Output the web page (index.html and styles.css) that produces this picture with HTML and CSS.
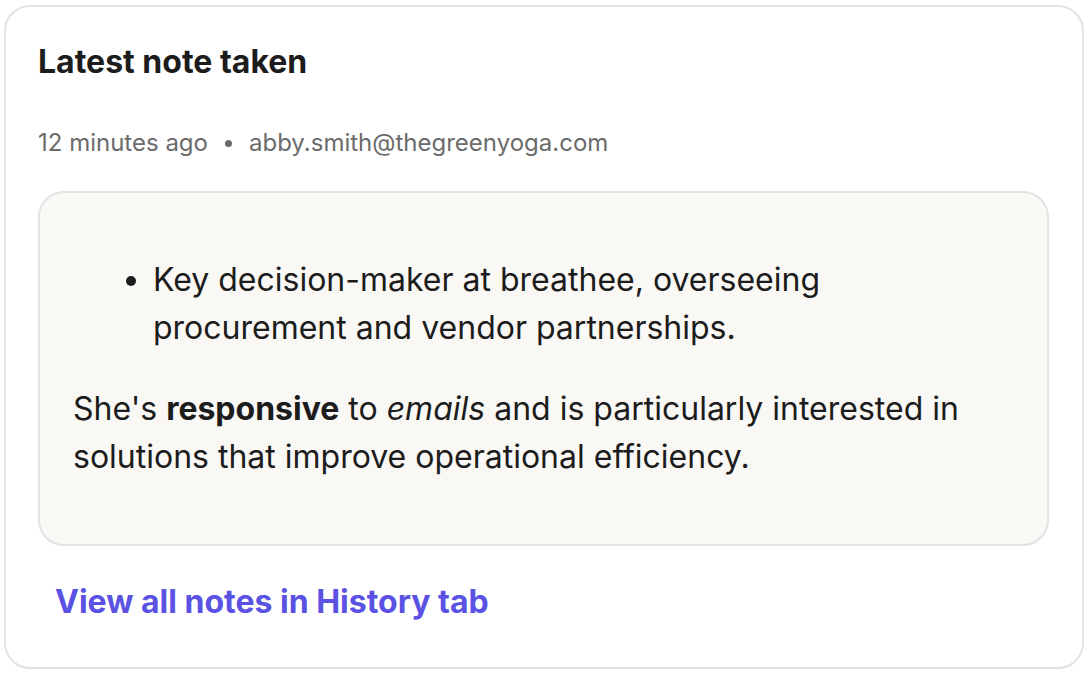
FILE: index.html
```html
<!DOCTYPE html>
<html>
<head>
<meta charset="utf-8">
<link rel="stylesheet" href="styles.css">
</head>
<body>
<div class="card">
  <h2 class="title">Latest note taken</h2>
  <div class="meta"><span>12 minutes ago</span><span class="dot"></span><span>abby.smith@thegreenyoga.com</span></div>
  <div class="note">
    <ul class="list">
      <li>Key decision-maker at breathee, overseeing procurement and vendor partnerships.</li>
    </ul>
    <p class="para">She's <strong>responsive</strong> to <em>emails</em> and is particularly interested in solutions that improve operational efficiency.</p>
  </div>
  <a class="link" href="#">View all notes in History tab</a>
</div>
</body>
</html>
```
FILE: styles.css
```css
html, body { margin: 0; padding: 0; background: #fff; }
body { font-family: Inter, "Noto Sans", sans-serif; color: #1c1c1c; }
.card {
  box-sizing: border-box;
  margin: 5px 0 0 4px;
  width: 1080px;
  height: 664px;
  border: 2px solid #e3e3e3;
  border-radius: 26px;
  padding: 35px 33px 0 32px;
  display: flex;
  flex-direction: column;
  align-items: flex-start;
}
.title { margin: 0; font-size: 32px; font-weight: 700; line-height: 40px; color: #1c1c1c; }
.meta {
  margin-top: 45px;
  display: flex; align-items: center; gap: 17px;
  font-size: 24px; color: #6b6b6b; line-height: 32px;
}
.dot { width: 7px; height: 7px; border-radius: 50%; background: #6b6b6b; }
.note {
  align-self: stretch;
  margin-top: 32px;
  background: #f9f8f5;
  border: 2px solid #e3e3e3;
  border-radius: 26px;
  height: 355px;
  box-sizing: border-box;
  padding: 63px 33px 0 33px;
  font-size: 32px; line-height: 48px; color: #1c1c1c;
}
.list { margin: 0; padding-left: 80px; }
.para { margin: 33px 0 0 0; }
.para strong { font-weight: 700; }
.link {
  margin-top: 36px; margin-left: 17px;
  font-size: 32px; font-weight: 700; color: #5b52e3; text-decoration: none; line-height: 40px;
}
```
